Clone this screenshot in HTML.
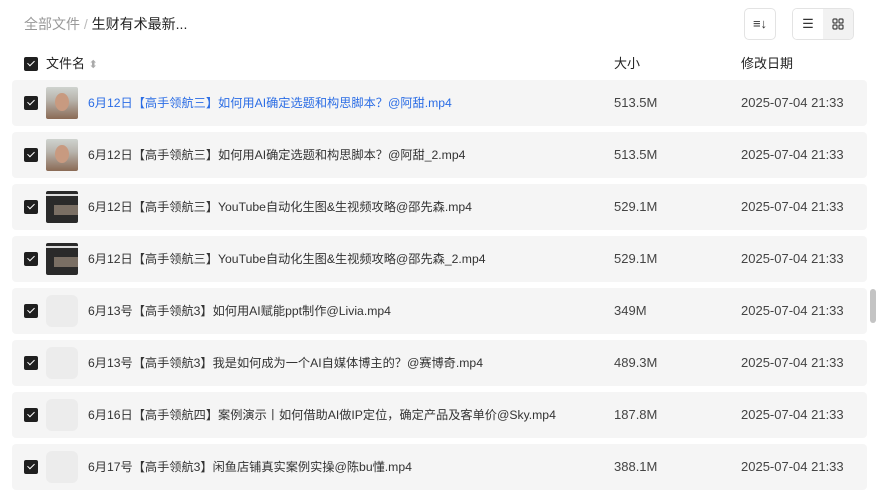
<!DOCTYPE html><html><head><meta charset="utf-8"><style>
body{margin:0;width:878px;height:495px;background:#fff;overflow:hidden;font-family:"Liberation Sans","Noto Sans CJK SC",sans-serif;color:#333;position:relative}
.a{position:absolute}
.cb{position:absolute;left:24px;width:14px;height:14px;background:#1f1f1f;border-radius:2px}
.cb:after{content:"";position:absolute;left:4.5px;top:2px;width:3px;height:6px;border:solid #fff;border-width:0 1.6px 1.6px 0;transform:rotate(45deg)}
.row{position:absolute;left:12px;width:855px;height:46px;background:#f5f5f5;border-radius:4px;font-size:13px}
.row .cb{left:12px;top:16px}
.th{position:absolute;left:34px;top:7px;width:32px;height:32px;border-radius:6px;background:#ececec;overflow:hidden}
.nm{position:absolute;left:76px;top:14px;line-height:18px;color:#333;font-size:12.2px;white-space:nowrap}
.sz{position:absolute;left:602px;top:14px;line-height:18px;color:#444}
.dt{position:absolute;left:729px;top:14px;line-height:18px;color:#444}
.face{border-radius:2px;background:linear-gradient(180deg,#cfd3cf 0,#b8b4ad 40%,#8a6a55 100%)}
.face:after{content:"";position:absolute;left:9px;top:6px;width:14px;height:18px;border-radius:50%;background:#c89a80}
.yt{border-radius:2px;background:#2a2a2a}
.yt:before{content:"";position:absolute;left:0;top:3px;width:32px;height:2px;background:#ddd}
.yt:after{content:"";position:absolute;left:8px;top:14px;width:24px;height:10px;background:#7a6f64}
</style></head><body>
<div class="a" style="left:24px;top:15px;font-size:14px;line-height:18px;white-space:nowrap"><span style="color:#999">全部文件</span><span style="color:#bbb"> / </span><span style="color:#222">生财有术最新...</span></div>
<div class="a" style="left:744px;top:8px;width:30px;height:30px;border:1px solid #e3e3e3;border-radius:5px;font-size:13px;text-align:center;line-height:30px;color:#333">≡↓</div>
<div class="a" style="left:792px;top:8px;width:60px;height:30px;border:1px solid #e3e3e3;border-radius:5px;overflow:hidden">
<div class="a" style="left:0;top:0;width:30px;height:30px;background:#fff;text-align:center;line-height:30px;font-size:13px">☰</div>
<div class="a" style="left:30px;top:0;width:30px;height:30px;background:#f2f2f2">
<svg class="a" style="left:9px;top:9px" width="12" height="12" viewBox="0 0 12 12" fill="none" stroke="#444" stroke-width="1.2"><rect x="1" y="1" width="4" height="4" rx="1"/><rect x="7" y="1" width="4" height="4" rx="1"/><rect x="1" y="7" width="4" height="4" rx="1"/><rect x="7" y="7" width="4" height="4" rx="1"/></svg></div></div>
<div class="cb" style="top:57px"></div>
<div class="a" style="left:46px;top:55px;font-size:13px;line-height:18px;color:#222">文件名 <span style="color:#aaa;font-size:11px">⬍</span></div>
<div class="a" style="left:614px;top:55px;font-size:13px;line-height:18px;color:#222">大小</div>
<div class="a" style="left:741px;top:55px;font-size:13px;line-height:18px;color:#222">修改日期</div>

<div class="row" style="top:80px"><div class="cb"></div><div class="th face"></div><div class="nm" style="color:#2b6de5">6月12日【高手领航三】如何用AI确定选题和构思脚本？@阿甜.mp4</div><div class="sz">513.5M</div><div class="dt">2025-07-04 21:33</div></div>
<div class="row" style="top:132px"><div class="cb"></div><div class="th face"></div><div class="nm">6月12日【高手领航三】如何用AI确定选题和构思脚本？@阿甜_2.mp4</div><div class="sz">513.5M</div><div class="dt">2025-07-04 21:33</div></div>
<div class="row" style="top:184px"><div class="cb"></div><div class="th yt"></div><div class="nm">6月12日【高手领航三】YouTube自动化生图&amp;生视频攻略@邵先森.mp4</div><div class="sz">529.1M</div><div class="dt">2025-07-04 21:33</div></div>
<div class="row" style="top:236px"><div class="cb"></div><div class="th yt"></div><div class="nm">6月12日【高手领航三】YouTube自动化生图&amp;生视频攻略@邵先森_2.mp4</div><div class="sz">529.1M</div><div class="dt">2025-07-04 21:33</div></div>
<div class="row" style="top:288px"><div class="cb"></div><div class="th"></div><div class="nm">6月13号【高手领航3】如何用AI赋能ppt制作@Livia.mp4</div><div class="sz">349M</div><div class="dt">2025-07-04 21:33</div></div>
<div class="row" style="top:340px"><div class="cb"></div><div class="th"></div><div class="nm">6月13号【高手领航3】我是如何成为一个AI自媒体博主的？@赛博奇.mp4</div><div class="sz">489.3M</div><div class="dt">2025-07-04 21:33</div></div>
<div class="row" style="top:392px"><div class="cb"></div><div class="th"></div><div class="nm">6月16日【高手领航四】案例演示丨如何借助AI做IP定位，确定产品及客单价@Sky.mp4</div><div class="sz">187.8M</div><div class="dt">2025-07-04 21:33</div></div>
<div class="row" style="top:444px"><div class="cb"></div><div class="th"></div><div class="nm">6月17号【高手领航3】闲鱼店铺真实案例实操@陈bu懂.mp4</div><div class="sz">388.1M</div><div class="dt">2025-07-04 21:33</div></div>
<div class="a" style="left:870px;top:289px;width:6px;height:34px;border-radius:3px;background:#c4c4c4"></div>
</body></html>
